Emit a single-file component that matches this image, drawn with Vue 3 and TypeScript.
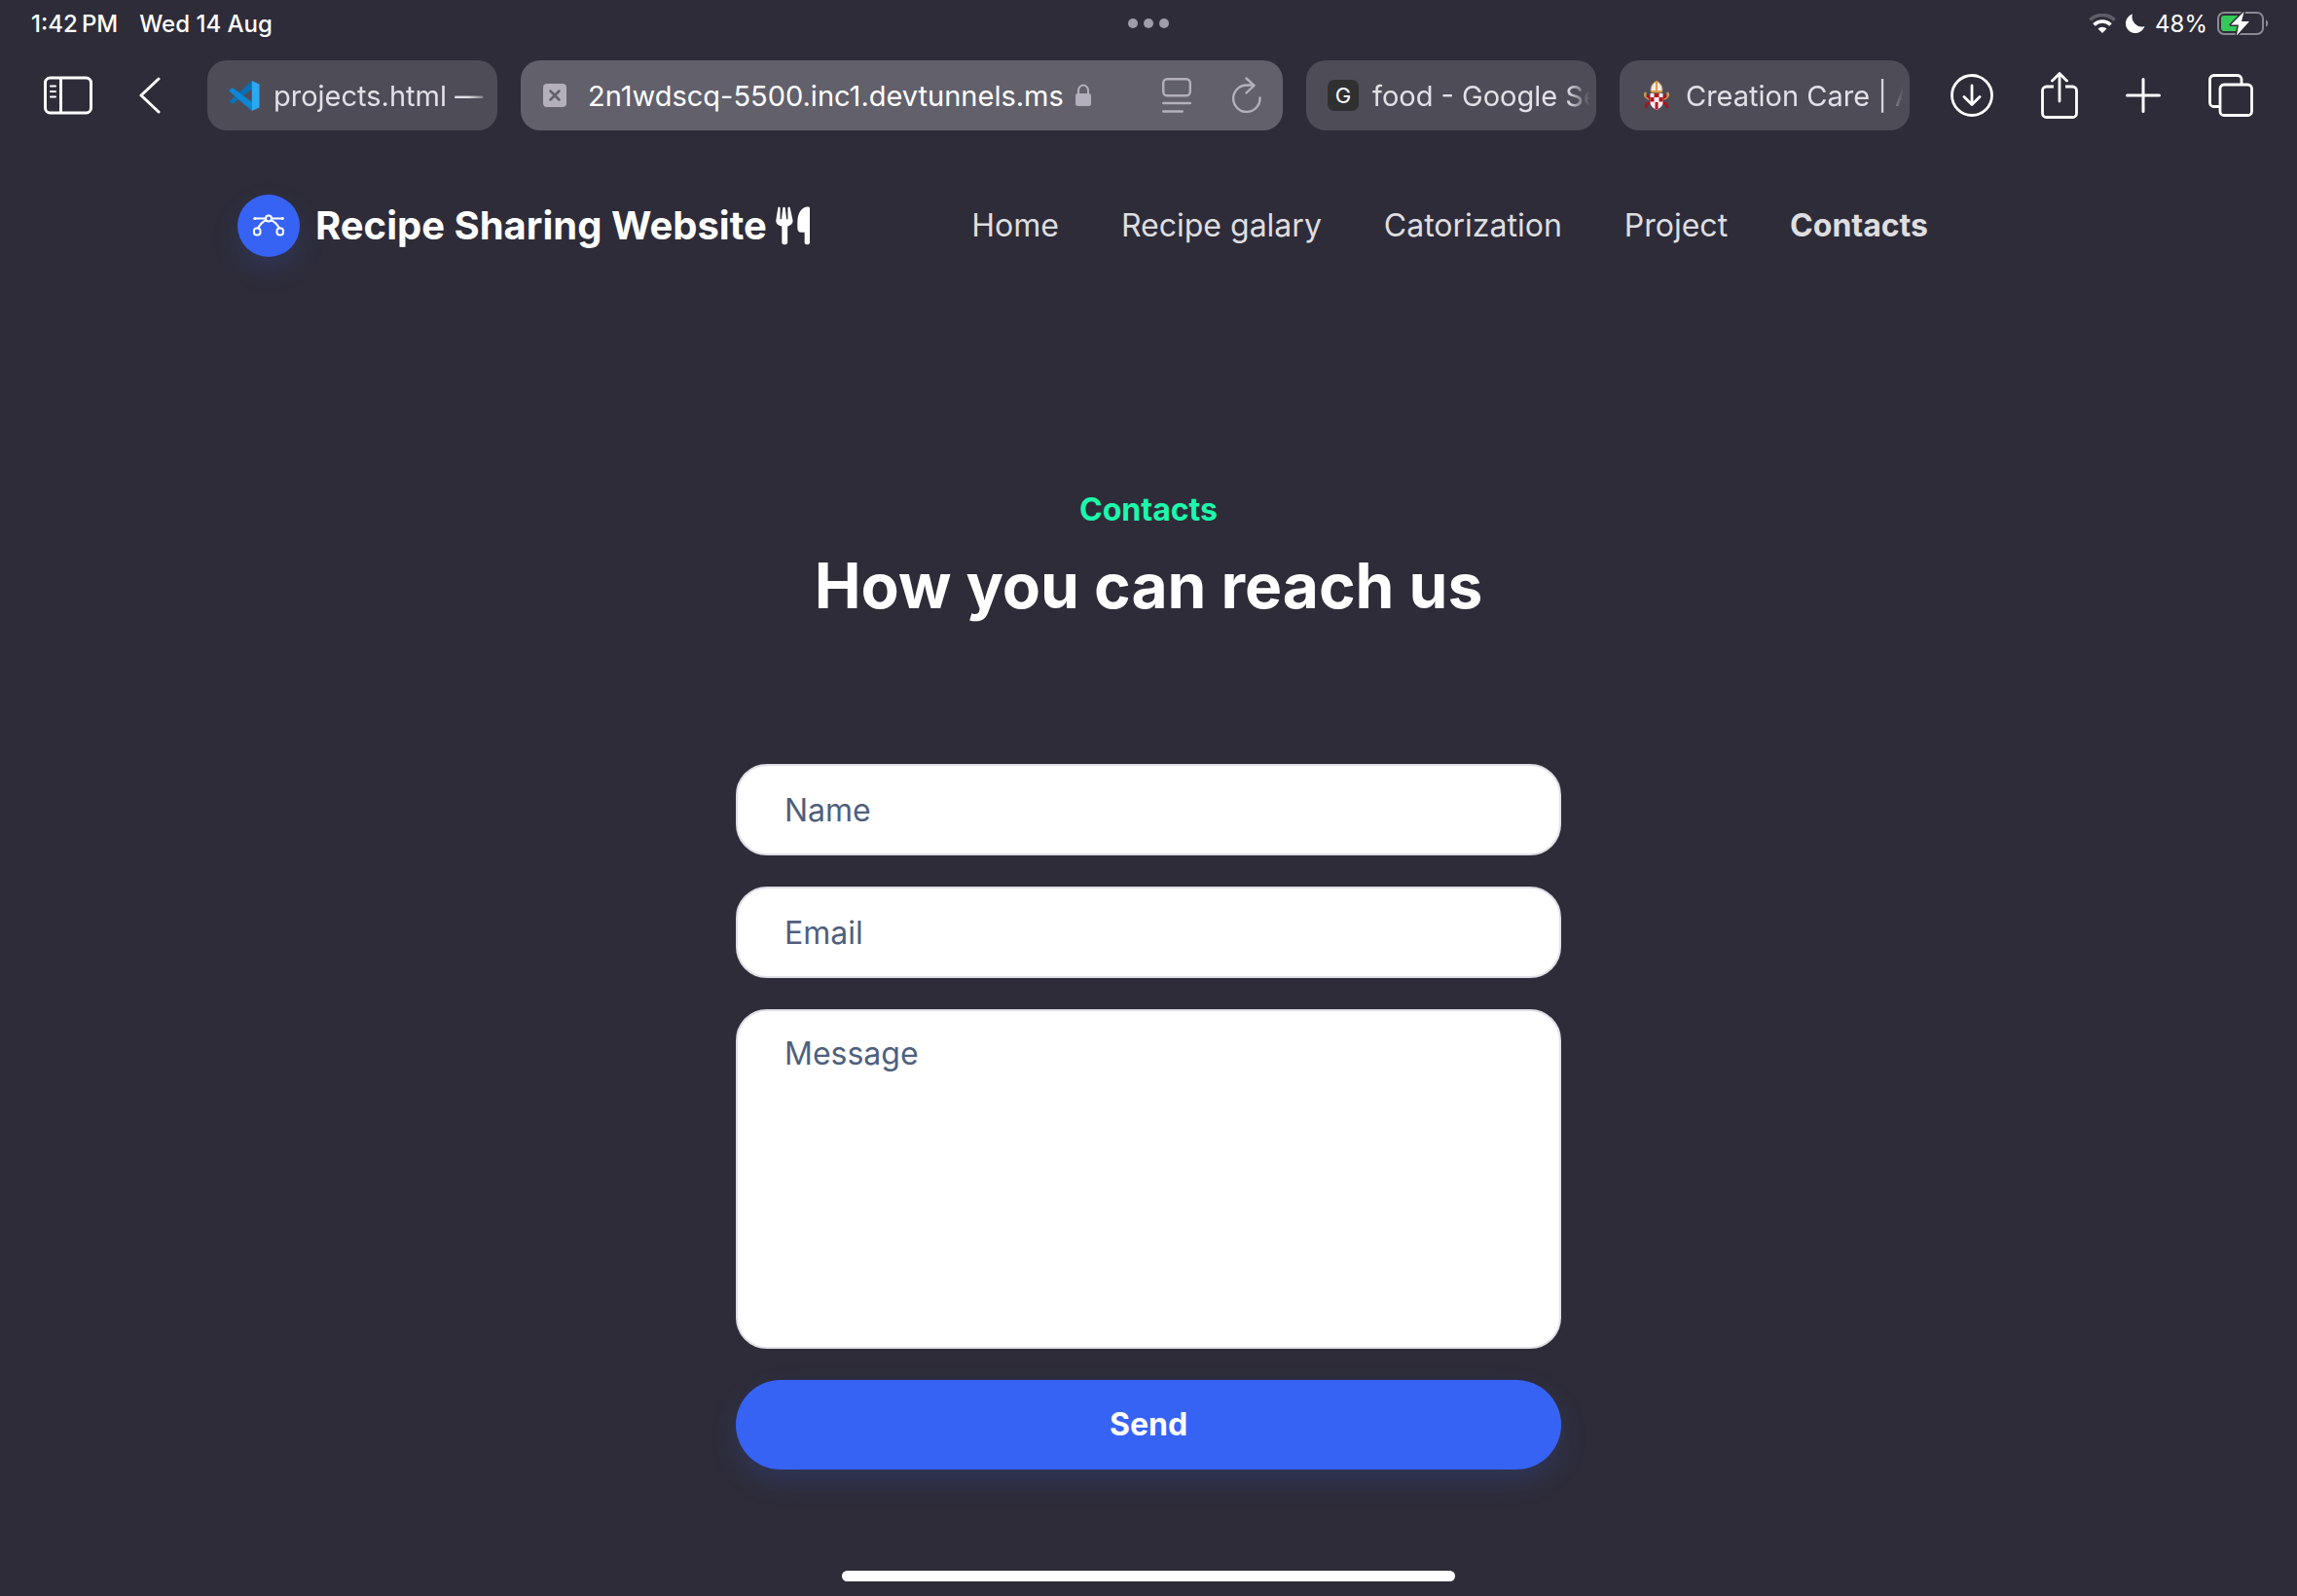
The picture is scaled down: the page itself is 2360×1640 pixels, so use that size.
<script setup lang="ts">
import { ref } from 'vue'

interface NavItem {
  label: string
  current?: boolean
}

const navItems: NavItem[] = [
  { label: 'Home' },
  { label: 'Recipe galary' },
  { label: 'Catorization' },
  { label: 'Project' },
  { label: 'Contacts', current: true },
]

const name = ref('')
const email = ref('')
const message = ref('')
</script>

<template>
  <div class="screen">
    <div class="status">
      <div class="status-side status-left">
        <span>1:42&#8201;PM</span>
        <span>Wed 14 Aug</span>
      </div>
      <div class="dots"><i></i><i></i><i></i></div>
      <div class="status-side status-right">
        <svg width="28" height="20" viewBox="0 0 28 20" aria-hidden="true">
          <path d="M1.5 6.500a18 18 0 0 1 25 0" fill="none" stroke="#5f5d68" stroke-width="3.600" />
          <path d="M5.500 11.500a12 12 0 0 1 17 0" fill="none" stroke="#fff" stroke-width="3.600" />
          <path d="M14 20l-4.500-4.500a6.500 6.500 0 0 1 9 0z" fill="#fff" />
        </svg>
        <svg width="20" height="20" viewBox="0 0 20 20" aria-hidden="true">
          <path d="M7 .5A10 10 0 1 0 19.500 13 A10 10 0 0 1 7 .5z" fill="#fff" />
        </svg>
        <span>48%</span>
        <svg width="54" height="28" viewBox="0 0 54 28" aria-hidden="true">
          <rect x="1" y="3" width="46" height="22" rx="6" fill="none" stroke="#8b8992" stroke-width="2" />
          <path d="M50 10.500c3 1 3 6 0 7z" fill="#8b8992" />
          <rect x="4" y="6" width="20" height="16" rx="3" fill="#34c759" />
          <path d="M27.500 2L14 15.500h8L20 26.500 33 12h-8z" fill="#fff" stroke="#2e2c38" stroke-width="3" stroke-linejoin="round" paint-order="stroke" />
        </svg>
      </div>
    </div>

    <div class="toolbar">
      <button class="tool" type="button" aria-label="Sidebar">
        <svg width="50" height="40" viewBox="0 0 50 40" fill="none" stroke="#fff" stroke-width="3" stroke-linecap="round">
          <rect x="1.500" y="2" width="47" height="36" rx="5" />
          <path d="M17.500 2.500v35" />
          <path d="M7 10.500h5M7 16h5M7 21.500h5" stroke-width="2" />
        </svg>
      </button>
      <button class="tool back" type="button" aria-label="Back">
        <svg width="22" height="38" viewBox="0 0 22 38" fill="none" stroke="#fff" stroke-width="3" stroke-linecap="round" stroke-linejoin="round">
          <path d="M20 2L2 19l18 17" />
        </svg>
      </button>

      <div class="tabs">
        <button class="tab" type="button">
          <svg width="32" height="33" viewBox="0 0 33 33" aria-hidden="true">
            <path d="M24.500 0.500L6.500 17l-5 4.500c-1 .8-1 1 0 2l1.500 1c.8.600 1.500.600 2 0L24.500 9.500z" fill="#0a70b5" />
            <path d="M24.500 32.500L1 12c-.8-.8-.8-1.300 0-2l2-1.600c.8-.600 1.300-.600 2 0L24.500 23z" fill="#0b87d4" />
            <path d="M24.500.5L32.500 4v25l-8 3.500z" fill="#2aa9f2" />
          </svg>
          <span class="tab-label">projects.html —</span>
        </button>
        <div class="tab tab-active">
          <svg width="24" height="24" viewBox="0 0 24 24" aria-hidden="true">
            <rect width="24" height="24" rx="4" fill="#b3b0bc" />
            <path d="M7.500 7.500l9 9M16.500 7.500l-9 9" stroke="#62606b" stroke-width="2.500" stroke-linecap="round" />
          </svg>
          <span class="address">2n1wdscq-5500.inc1.devtunnels.ms</span>
          <svg class="lock" width="16" height="24" viewBox="0 0 16 24" aria-hidden="true">
            <rect y="10" width="16" height="13" rx="2.500" fill="#b3b0bc" />
            <path d="M3 11V7a5 5.500 0 0 1 10 0v4" fill="none" stroke="#b3b0bc" stroke-width="2" />
          </svg>
          <button class="tool reader" type="button" aria-label="Page menu">
            <svg width="30" height="36" viewBox="0 0 30 36" fill="none" stroke="#b3b0bc" stroke-width="2.400" stroke-linecap="round">
              <rect x="1.200" y="1.200" width="27.600" height="17" rx="4" />
              <path d="M1.200 26h27.600M1.200 34.500h19.500" />
            </svg>
          </button>
          <button class="tool reload" type="button" aria-label="Reload">
            <svg width="30" height="38" viewBox="0 0 30 38" fill="none" stroke="#b3b0bc" stroke-width="2.400" stroke-linecap="round" stroke-linejoin="round">
              <path d="M28.500 21.500A13.700 13.700 0 1 1 15 8.500h7" />
              <path d="M14.500 1.500l8 7.300-8 7.700" />
            </svg>
          </button>
        </div>
        <button class="tab" type="button">
          <span class="favicon">G</span>
          <span class="tab-label">food - Google Search</span>
        </button>
        <button class="tab" type="button">
          <svg width="32" height="32" viewBox="0 0 32 32" aria-hidden="true">
            <path d="M9 20c-5-3-6-4-4-7M23 20c5-3 6-4 4-7" fill="none" stroke="#c99a4d" stroke-width="2.500" />
            <path d="M6 16l4 3v4l-4 2-1 4M26 16l-4 3v4l4 2 1 4" fill="none" stroke="#a3161f" stroke-width="3" />
            <path d="M16 1c-5 3-7 7-5.500 12h11C23 8 21 4 16 1z" fill="#f2e8ea" stroke="#b98547" stroke-width="1" />
            <path d="M16 2v10M11 12h10" stroke="#d9a14c" stroke-width="2" />
            <path d="M9.500 14h13v9c0 4-3 6-6.500 8-3.500-2-6.500-4-6.500-8z" fill="#f4eef0" />
            <path d="M13.500 14h5v4h-5zM9.500 18h4v4.500h-4zM18.500 18h4v4.500h-4zM14.500 23h3v7.500h-3z" fill="#b01825" />
          </svg>
          <span class="tab-label">Creation Care | Anglican</span>
        </button>
      </div>

      <div class="tools">
        <button class="tool" type="button" aria-label="Downloads">
          <svg width="44" height="44" viewBox="0 0 44 44" fill="none" stroke="#fff" stroke-width="2.800" stroke-linecap="round" stroke-linejoin="round">
            <circle cx="22" cy="22" r="20.500" />
            <path d="M22 12v19.500M14 23.500l8 8 8-8" />
          </svg>
        </button>
        <button class="tool" type="button" aria-label="Share">
          <svg width="38" height="48" viewBox="0 0 38 48" fill="none" stroke="#fff" stroke-width="2.800" stroke-linecap="round" stroke-linejoin="round">
            <path d="M13 15H5.500a4 4 0 0 0-4 4v23.500a4 4 0 0 0 4 4h27a4 4 0 0 0 4-4V19a4 4 0 0 0-4-4H25" stroke-linecap="butt" />
            <path d="M19 30V2M11.500 9L19 1.500 26.500 9" />
          </svg>
        </button>
        <button class="tool" type="button" aria-label="New tab">
          <svg width="36" height="36" viewBox="0 0 36 36" stroke="#fff" stroke-width="3" stroke-linecap="round">
            <path d="M18 1.500v33M1.500 18h33" />
          </svg>
        </button>
        <button class="tool" type="button" aria-label="Tab overview">
          <svg width="46" height="44" viewBox="0 0 46 44" fill="none" stroke="#fff" stroke-width="2.800">
            <path d="M11 33.500H5.500a4 4 0 0 1-4-4v-24a4 4 0 0 1 4-4H30a4 4 0 0 1 4 4V11" />
            <rect x="12" y="11" width="32.500" height="31.500" rx="4" />
          </svg>
        </button>
      </div>
    </div>

    <header class="site-header">
      <a class="brand" href="#">
        <span class="brand-mark">
          <svg width="32" height="24" viewBox="0 0 32 24" fill="none" stroke="#fff" stroke-width="2" aria-hidden="true">
            <path d="M2 4.500h10.500M19.500 4.500H30" />
            <circle cx="16" cy="4.500" r="3" />
            <path d="M13 6.500C9 8 7 11 5 14.500M19 6.500c4 1.500 6 4.500 8 8" />
            <rect x="1" y="14.500" width="6.500" height="7" rx="2.800" />
            <rect x="24.500" y="14.500" width="6.500" height="7" rx="2.800" />
            <circle cx="1.800" cy="4.500" r="1.600" fill="#fff" stroke="none" />
            <circle cx="30.200" cy="4.500" r="1.600" fill="#fff" stroke="none" />
          </svg>
        </span>
        <span class="brand-name">Recipe Sharing Website</span>
        <svg class="cutlery" width="35" height="40" viewBox="0 0 36 40" fill="#fff" aria-hidden="true">
          <path d="M2.500 0.500C3.200-.2 4.700 0 4.700 1v12h1.400L7.500 1c.2-1 2.300-1 2.500 0l1.400 12h1.400V1c0-1 1.500-1.200 2.200-.5L18 14c.5 3-2 5.500-5.500 6.500V38c0 2.500-6 2.500-6 0V20.500C2 19.500 0 17 .3 14z" />
          <path d="M36 1.500V38c0 2.500-5.500 2.500-5.500 0V27H27c-3 0-4-2-4-5v-6C23 7 27 1 33 0c2-.3 3 .3 3 1.500z" />
        </svg>
      </a>
      <nav class="nav">
        <a v-for="item in navItems" :key="item.label" href="#" :class="{ current: item.current }">{{ item.label }}</a>
      </nav>
    </header>

    <main class="main">
      <p class="eyebrow">Contacts</p>
      <h1>How you can reach us</h1>
      <form class="form" @submit.prevent>
        <input v-model="name" type="text" placeholder="Name" aria-label="Name" />
        <input v-model="email" type="email" placeholder="Email" aria-label="Email" />
        <textarea v-model="message" placeholder="Message" aria-label="Message"></textarea>
        <button class="send" type="submit">Send</button>
      </form>
    </main>

    <div class="home-bar"></div>
  </div>
</template>

<style>
body {
  margin: 0;
  background: #2e2c38;
}
</style>

<style scoped>
.screen {
  box-sizing: border-box;
  min-height: 100vh;
  display: flex;
  flex-direction: column;
  background: #2e2c38;
  color: #fff;
  font-family: Inter, "Liberation Sans", sans-serif;
}

svg {
  display: block;
  flex: none;
}

button {
  margin: 0;
  padding: 0;
  border: 0;
  background: none;
  color: inherit;
  font: inherit;
}

.status {
  display: grid;
  grid-template-columns: 1fr auto 1fr;
  align-items: center;
  height: 48px;
  padding: 0 28px;
  font-size: 24px;
  font-weight: 500;
}

.status-side {
  display: flex;
  align-items: center;
  gap: 22px;
}

.status-left {
  padding-left: 4px;
}

.status-right {
  justify-content: flex-end;
  gap: 10px;
  font-weight: 400;
}

.dots {
  display: flex;
  gap: 6px;
}

.dots i {
  width: 10px;
  height: 10px;
  border-radius: 50%;
  background: #a09daa;
}

.toolbar {
  display: flex;
  align-items: center;
  height: 72px;
  margin-top: 14px;
  padding: 0 45px;
}

.tool {
  flex: none;
}

.back {
  margin-left: 48px;
}

.tabs {
  display: flex;
  flex: 1;
  gap: 24px;
  min-width: 0;
  margin: 0 42px 0 48px;
}

.tab {
  display: flex;
  flex: 0 0 298px;
  box-sizing: border-box;
  align-items: center;
  min-width: 0;
  height: 72px;
  padding: 0 6px 0 22px;
  border-radius: 20px;
  background: #4e4c57;
  color: #e3e1e6;
  font-size: 29px;
  white-space: nowrap;
}

.tab-label {
  flex: 1;
  min-width: 0;
  margin-left: 14px;
  overflow: hidden;
  text-align: left;
  mask-image: linear-gradient(to right, #000 calc(100% - 24px), transparent);
}

.tab-active {
  flex: 1;
  padding: 0 22px 0 23px;
  background: #62606b;
  color: #fff;
}

.address {
  margin-left: 22px;
}

.lock {
  margin-left: 12px;
}

.reader {
  margin-left: auto;
}

.reload {
  margin-left: 42px;
}

.favicon {
  flex: none;
  width: 32px;
  border-radius: 7px;
  background: #303030;
  color: #fff;
  font-size: 22px;
  line-height: 32px;
  text-align: center;
}

.tools {
  display: flex;
  align-items: center;
  gap: 49px;
}

.site-header {
  display: flex;
  align-items: center;
  justify-content: space-between;
  height: 64px;
  margin-top: 66px;
  padding: 0 379px 0 244px;
}

.site-header a {
  color: #dedee0;
  text-decoration: none;
}

.site-header .brand {
  display: flex;
  align-items: center;
  color: #fff;
}

.brand-mark {
  display: grid;
  place-items: center;
  width: 64px;
  height: 64px;
  border-radius: 50%;
  background: #3763f4;
  box-shadow: 0 12px 28px rgba(55, 99, 244, 0.18);
}

.brand-name {
  margin-left: 16px;
  padding-bottom: 2px;
  font-size: 40px;
  font-weight: 700;
}

.cutlery {
  margin-left: 9px;
}

.nav {
  display: flex;
  gap: 64px;
  padding-bottom: 2px;
  font-size: 32px;
}

.nav .current {
  font-weight: 700;
}

.main {
  display: flex;
  flex: 1;
  flex-direction: column;
  align-items: center;
  padding-top: 236px;
}

.eyebrow {
  margin: 0;
  color: #1cf8ac;
  font-size: 32px;
  font-weight: 700;
  line-height: 48px;
}

h1 {
  margin: 16px 0 0;
  font-size: 64px;
  font-weight: 700;
  line-height: 76px;
}

.form {
  display: flex;
  flex-direction: column;
  gap: 32px;
  width: 848px;
  max-width: 100%;
  margin-top: 145px;
}

input,
textarea {
  box-sizing: border-box;
  width: 100%;
  height: 94px;
  margin: 0;
  padding: 0 48px;
  border: 2px solid #dfdfe7;
  border-radius: 32px;
  outline: 0;
  background: #fff;
  color: #1e293b;
  font: inherit;
  font-size: 32px;
}

textarea {
  display: block;
  height: 349px;
  padding-top: 20px;
  line-height: 48px;
  resize: none;
}

input::placeholder,
textarea::placeholder {
  color: #4f5f7e;
  opacity: 1;
}

.send {
  height: 92px;
  padding-bottom: 2px;
  border-radius: 46px;
  background: #3763f4;
  box-shadow: 0 12px 28px rgba(55, 99, 244, 0.18);
  font-size: 32px;
  font-weight: 700;
}

.home-bar {
  align-self: center;
  width: 630px;
  height: 11px;
  margin-bottom: 15px;
  border-radius: 6px;
  background: #fff;
}
</style>
